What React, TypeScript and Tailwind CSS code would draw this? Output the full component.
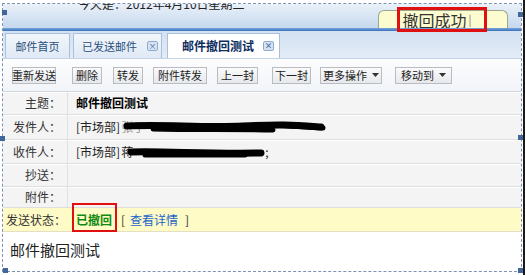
import { FC, ReactNode } from "react";

const font = "font-['Noto_Sans_CJK_SC','Noto_Sans',sans-serif]";

const CloseIcon: FC = () => (
  <span className="flex h-[10px] w-[11px] items-center justify-center rounded-[2px] border border-[#8eaad0] bg-[#d6e3f3] text-[8px] leading-none text-[#4a6a9a]">
    ×
  </span>
);

const Btn: FC<{ label: string; w: string; ml: string; drop?: boolean }> = ({ label, w, ml, drop }) => (
  <div
    className={`${w} ${ml} flex h-[17px] shrink-0 items-center justify-center gap-[5px] whitespace-nowrap border border-[#b9bcc2] bg-gradient-to-b from-[#fbfbfb] to-[#e6e8eb] text-[11px] leading-none text-[#222]`}
  >
    {label}
    {drop && (
      <svg width="7" height="4" viewBox="0 0 7 4">
        <path d="M0 0h7L3.5 4z" fill="#333" />
      </svg>
    )}
  </div>
);

const Row: FC<{ label: string; h: string; children?: ReactNode }> = ({ label, h, children }) => (
  <div className={`${h} flex border-b border-[#dedede] bg-[#f4f4f4] shadow-[inset_0_1px_0_#fff]`}>
    <div className="flex w-[65px] items-center justify-end whitespace-nowrap border-r border-[#e2e2e2] pr-[6px] text-[12px] text-[#333]">
      {label}
    </div>
    <div className="flex flex-1 items-center whitespace-nowrap pl-[8px] text-[12px] text-[#222]">{children}</div>
  </div>
);

const Scribble: FC<{ w: number; d: string[] }> = ({ w, d }) => (
  <svg width={w} height="14" viewBox={`0 0 ${w} 14`} className="shrink-0">
    {d.map((p, i) => (
      <path key={i} d={p} stroke="#000" strokeWidth={i === 0 ? 7 : 5} strokeLinecap="round" fill="none" />
    ))}
  </svg>
);

const Handle: FC<{ cls: string }> = ({ cls }) => (
  <div className={`absolute h-[5px] w-[5px] bg-[#41679a] ${cls}`} />
);

export default function App() {
  return (
    <div className={`relative h-[275px] w-[525px] overflow-hidden border-r-2 border-[#1a1a1a] bg-white pl-[2px] pt-[3px] ${font}`}>
      <div className="flex h-[269px] w-[520px] flex-col overflow-hidden border border-dashed border-[#7d93b3]">
        {/* header */}
        <div className="flex h-[24px] items-start justify-between bg-gradient-to-b from-[#eaf1f9] to-[#c5d8ee]">
          <div className="ml-[75px] -mt-[8px] whitespace-nowrap text-[12px] leading-[16px] text-[#222]">今天是：2012年4月10日星期二</div>
          <div className="mr-[13px] mt-[6px] flex h-[18px] w-[130px] items-center justify-center rounded-t-[6px] border border-b-0 border-[#9aa88e] bg-[#fdfbd0] text-[16px] leading-none text-[#333]">
            <span className="-ml-[12px]">撤回成功</span>
            <span className="ml-[2px] text-[11px] text-[#777]">|</span>
          </div>
        </div>
        <div className="h-[3px] bg-gradient-to-b from-[#79a5da] to-[#3b71b9]" />
        {/* tabs */}
        <div className="flex h-[27px] items-end bg-gradient-to-b from-[#d3e1f2] to-[#e3ecf7]">
          <div className="ml-[2px] flex h-[25px] w-[65px] items-center justify-center whitespace-nowrap border border-b-0 border-[#a9bfdc] bg-gradient-to-b from-[#f2f6fb] to-[#dfe9f5] text-[11px] text-[#2b4f7c]">
            邮件首页
          </div>
          <div className="ml-[3px] flex h-[25px] w-[89px] items-center whitespace-nowrap border border-b-0 border-[#a9bfdc] bg-gradient-to-b from-[#f2f6fb] to-[#dfe9f5] pl-[8px] text-[11px] text-[#2b4f7c]">
            <span>已发送邮件</span>
            <span className="ml-[10px]">
              <CloseIcon />
            </span>
          </div>
          <div className="ml-[5px] flex h-[25px] w-[113px] items-center whitespace-nowrap border border-b-0 border-[#a9bfdc] bg-white pl-[14px] text-[12px] font-bold text-[#0d2d5e]">
            <span>邮件撤回测试</span>
            <span className="ml-[9px]">
              <CloseIcon />
            </span>
          </div>
        </div>
        {/* toolbar */}
        <div className="flex h-[34px] items-center border-b border-[#cfd6df] border-t border-t-[#c4d4e8] bg-gradient-to-b from-[#fdfdfe] to-[#f1f4f8]">
          <Btn label="重新发送" w="w-[44px]" ml="ml-[9px]" />
          <Btn label="删除" w="w-[30px]" ml="ml-[16px]" />
          <Btn label="转发" w="w-[30px]" ml="ml-[11px]" />
          <Btn label="附件转发" w="w-[54px]" ml="ml-[10px]" />
          <Btn label="上一封" w="w-[41px]" ml="ml-[10px]" />
          <Btn label="下一封" w="w-[39px]" ml="ml-[14px]" />
          <Btn label="更多操作" w="w-[62px]" ml="ml-[9px]" drop />
          <Btn label="移动到" w="w-[57px]" ml="ml-[13px]" drop />
        </div>
        {/* header fields */}
        <Row label="主题：" h="h-[23px]">
          <span className="font-bold text-black">邮件撤回测试</span>
        </Row>
        <Row label="发件人：" h="h-[25px]">
          <span>[市场部]</span>
          <span className="ml-[1px] text-[#999]">张子</span>
          <span className="-ml-[22px]">
            <Scribble
              w={204}
              d={["M4 6 C40 4 80 8 120 6 S170 5 198 7", "M30 9 C70 10 110 9 150 10", "M150 5 L200 8"]}
            />
          </span>
        </Row>
        <Row label="收件人：" h="h-[24px]">
          <span>[市场部]</span>
          <span className="ml-[1px]">蒋</span>
          <span className="-ml-[8px]">
            <Scribble w={142} d={["M6 7 C40 6 80 9 136 8", "M20 10 L120 10"]} />
          </span>
          <span className="-ml-[2px]">;</span>
        </Row>
        <Row label="抄送：" h="h-[23px]" />
        <Row label="附件：" h="h-[21px]" />
        <div className="flex h-[24px] items-center whitespace-nowrap border-b border-[#e4e0c4] bg-[#fffbc7] text-[12px]">
          <div className="w-[65px] pr-[2px] text-right text-[#333]">发送状态：</div>
          <span className="ml-[8px] font-bold text-[#118a11]">已撤回</span>
          <span className="ml-[9px] text-[#333]">[</span>
          <span className="ml-[5px] text-[#1a66c9]">查看详情</span>
          <span className="ml-[7px] text-[#333]">]</span>
        </div>
        {/* body */}
        <div className="flex-1 bg-white pl-[7px] pt-[8px] text-[15px] leading-[20px] text-[#222]">邮件撤回测试</div>
      </div>

      {/* annotation overlays */}
      <div className="absolute left-[397px] top-[7px] h-[25px] w-[90px] border-[3px] border-[#e01010]" />
      <div className="absolute left-[72px] top-[203px] h-[29px] w-[45px] border-2 border-[#e01010]" />
      <Handle cls="left-[2px] top-[10px]" />
      <Handle cls="left-[518px] top-[12px]" />
      <Handle cls="left-[0px] top-[136px]" />
      <Handle cls="left-[518px] top-[135px]" />
      <Handle cls="left-[3px] top-[268px]" />
      <Handle cls="left-[518px] top-[268px]" />
    </div>
  );
}
